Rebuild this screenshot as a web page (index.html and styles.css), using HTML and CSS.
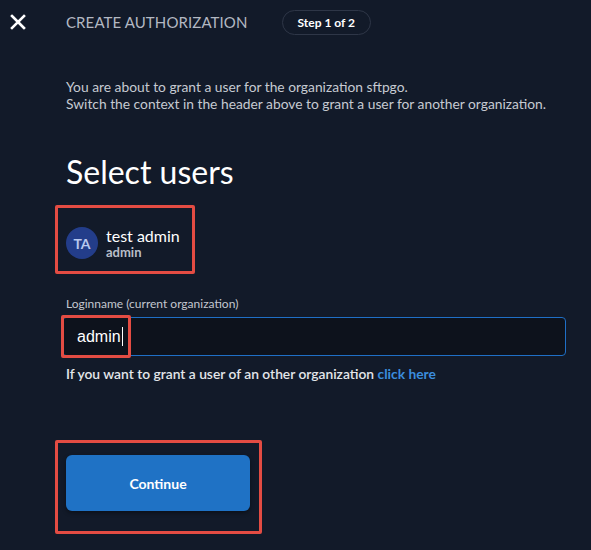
FILE: index.html
```html
<!DOCTYPE html>
<html lang="en">
<head>
<meta charset="utf-8">
<title>Create authorization</title>
<link rel="stylesheet" href="styles.css">
</head>
<body>
<div class="page">
  <header class="topbar">
    <button class="close" aria-label="Close">
      <svg width="16" height="16" viewBox="0 0 16 16"><path d="M2 2L14 14M14 2L2 14" stroke="#ffffff" stroke-width="2.6" stroke-linecap="square"/></svg>
    </button>
    <h1 class="title">CREATE AUTHORIZATION</h1>
    <span class="step">Step 1 of 2</span>
  </header>
  <main class="content">
    <p class="intro">You are about to grant a user for the organization sftpgo.<br>Switch the context in the header above to grant a user for another organization.</p>
    <h2 class="heading">Select users</h2>
    <div class="user-box">
      <div class="avatar">TA</div>
      <div class="user-info">
        <div class="user-name">test admin</div>
        <div class="user-login">admin</div>
      </div>
    </div>
    <label class="label">Loginname (current organization)</label>
    <div class="input">
      <span class="input-text">admin</span><span class="caret"></span>
      <span class="hl hl-input"></span>
    </div>
    <p class="helper">If you want to grant a user of an other organization <a class="link">click here</a></p>
    <div class="btn-box">
      <button class="btn">Continue</button>
    </div>
  </main>
</div>
</body>
</html>
```

FILE: styles.css
```css
* { box-sizing: border-box; }
html, body { margin: 0; padding: 0; }
body {
  background: #121a29;
  font-family: Lato, "Open Sans", sans-serif;
  color: #ffffff;
  width: 591px;
  height: 550px;
  overflow: hidden;
}
.page { padding: 0; }
.topbar {
  display: flex;
  align-items: center;
  height: 44px;
}
.close {
  background: none;
  border: 0;
  padding: 0;
  margin: 0 0 0 10px;
  width: 16px;
  height: 16px;
  display: flex;
}
.title {
  margin: 0 0 0 40px;
  font-size: 15px;
  font-weight: 400;
  color: #b3b8c2;
  letter-spacing: 0.1px;
}
.step {
  margin-left: 34px;
  height: 25px;
  padding: 0 15px;
  border: 1px solid #2e3647;
  border-radius: 13px;
  font-size: 12px;
  font-weight: 700;
  color: #ffffff;
  display: flex;
  align-items: center;
}
.content { padding: 0 0 0 66px; }
.intro {
  margin: 34px 0 0 0;
  font-size: 13.8px;
  line-height: 17px;
  color: #c6cad2;
}
.heading {
  margin: 40px 0 0 0;
  font-size: 32px;
  font-weight: 400;
  line-height: 40px;
  color: #ffffff;
}
.user-box {
  margin: 13px 0 0 -11px;
  width: 140px;
  height: 69px;
  border: 3px solid #e34c43;
  border-radius: 2px;
  display: flex;
  align-items: flex-start;
  padding: 19px 0 0 8px;
}
.avatar {
  width: 32px;
  height: 32px;
  border-radius: 50%;
  background: #233d8a;
  color: #b8c8ef;
  font-size: 14px;
  font-weight: 700;
  display: flex;
  align-items: center;
  justify-content: center;
  flex: none;
}
.user-info { margin: 0 0 0 8px; }
.user-name { font-size: 16px; line-height: 18px; color: #ffffff; }
.user-login { font-size: 13px; line-height: 15px; color: #b9bec8; font-weight: 700; }
.label {
  display: block;
  margin-top: 23px;
  font-size: 12px;
  line-height: 14px;
  color: #c3c7cf;
}
.input {
  position: relative;
  margin: 6px 0 0 -4px;
  width: 504px;
  height: 39px;
  border: 1px solid #1f6fc6;
  border-radius: 4px;
  background: #0d121c;
  display: flex;
  align-items: center;
  padding-left: 14px;
}
.input-text {
  font-family: "Liberation Sans", Arial, sans-serif;
  font-size: 16px;
  color: #ffffff;
}
.caret {
  display: inline-block;
  width: 1px;
  height: 19px;
  background: #ffffff;
  margin-left: 1px;
}
.hl-input {
  position: absolute;
  left: -2px;
  top: -3px;
  width: 70px;
  height: 43px;
  border: 3px solid #e34c43;
  border-radius: 2px;
}
.helper {
  margin: 9px 0 0 0;
  font-size: 13.8px;
  line-height: 17px;
  color: #e3e6ea;
  font-weight: 600;
}
.link { color: #3b8ddd; font-weight: 700; }
.btn-box {
  margin: 58px 0 0 -11px;
  width: 207px;
  height: 94px;
  border: 3px solid #e34c43;
  border-radius: 2px;
  padding: 12px 0 0 8px;
}
.btn {
  width: 184px;
  height: 56px;
  border: 0;
  border-radius: 6px;
  background: #1f72c5;
  color: #ffffff;
  font-family: Lato, sans-serif;
  font-size: 14px;
  font-weight: 700;
  box-shadow: 0 2px 4px rgba(0,0,0,0.4);
}
```
